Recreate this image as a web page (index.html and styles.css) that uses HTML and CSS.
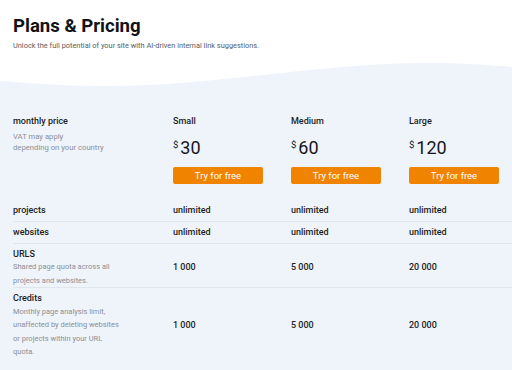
FILE: index.html
```html
<!DOCTYPE html>
<html lang="en">
<head>
<meta charset="utf-8">
<title>Plans &amp; Pricing</title>
<link rel="stylesheet" href="styles.css">
</head>
<body>
<header class="hero">
  <h1 class="title">Plans &amp; Pricing</h1>
  <p class="subtitle">Unlock the full potential of your site with AI-driven internal link suggestions.</p>
</header>
<svg class="wave" viewBox="0 0 512 30" preserveAspectRatio="none" aria-hidden="true">
  <path d="M0 20.7 C40 24.5 75 26 110 26 C215 26 320 3 427 3 C462 3 490 5 512 7 L512 30 L0 30 Z" fill="#eff3fa"/>
</svg>
<main class="pricing">
  <div class="row head">
    <div class="label-cell">
      <div class="label">monthly price</div>
      <div class="desc desc-tight">VAT may apply<br>depending on your country</div>
    </div>
    <div class="plan">
      <div class="label">Small</div>
      <div class="price"><span class="cur">$</span><span class="amount">30</span></div>
      <button class="btn">Try for free</button>
    </div>
    <div class="plan">
      <div class="label">Medium</div>
      <div class="price"><span class="cur">$</span><span class="amount">60</span></div>
      <button class="btn">Try for free</button>
    </div>
    <div class="plan">
      <div class="label">Large</div>
      <div class="price"><span class="cur">$</span><span class="amount">120</span></div>
      <button class="btn">Try for free</button>
    </div>
  </div>
  <div class="row line">
    <div class="label">projects</div>
    <div class="value">unlimited</div>
    <div class="value">unlimited</div>
    <div class="value">unlimited</div>
  </div>
  <div class="row line">
    <div class="label">websites</div>
    <div class="value">unlimited</div>
    <div class="value">unlimited</div>
    <div class="value">unlimited</div>
  </div>
  <div class="row line tall">
    <div class="label-cell">
      <div class="label">URLS</div>
      <div class="desc">Shared page quota across all projects and websites.</div>
    </div>
    <div class="value">1 000</div>
    <div class="value">5 000</div>
    <div class="value">20 000</div>
  </div>
  <div class="row line tall last">
    <div class="label-cell">
      <div class="label">Credits</div>
      <div class="desc">Monthly page analysis limit, unaffected by deleting websites or projects within your URL quota.</div>
    </div>
    <div class="value">1 000</div>
    <div class="value">5 000</div>
    <div class="value">20 000</div>
  </div>
</main>
</body>
</html>
```
FILE: styles.css
```css
html, body {
  margin: 0;
  padding: 0;
  background: #ffffff;
  font-family: Roboto, "Liberation Sans", Arial, sans-serif;
  color: #1d1e22;
}

.hero {
  padding: 15px 13px 9px;
}

.title {
  margin: 0;
  font-size: 18.6px;
  line-height: 23px;
  font-weight: 700;
  color: #111317;
}

.subtitle {
  margin: 3px 0 0;
  font-size: 7.4px;
  line-height: 10px;
  color: #585d65;
}

.wave {
  display: block;
  width: 100%;
  height: 30px;
}

.pricing {
  background: #eff3fa;
  padding: 26px 0 10px 13px;
  min-height: 254px;
}

.row {
  display: grid;
  grid-template-columns: 132px 90px 90px 90px;
  column-gap: 28px;
  align-items: center;
}

.row.head {
  align-items: start;
  padding-bottom: 16px;
}

.row.line {
  padding: 5px 0;
  border-bottom: 1px solid #e1e6ee;
}

.row.tall {
  padding-bottom: 0;
}

.row.last {
  border-bottom: none;
  padding-bottom: 1px;
}

.label {
  font-size: 9px;
  line-height: 11px;
  font-weight: 500;
  color: #1d1e22;
}

.value {
  font-size: 9px;
  line-height: 11px;
  font-weight: 500;
  color: #1d1e22;
}

.desc {
  margin-top: 0.5px;
  max-width: 111px;
  font-size: 7.5px;
  line-height: 13.5px;
  color: #8b9098;
}

.desc.desc-tight {
  margin-top: 5px;
  line-height: 10.7px;
  max-width: none;
  font-size: 7.7px;
}

.plan {
  display: flex;
  flex-direction: column;
  align-items: stretch;
}

.price {
  display: flex;
  align-items: flex-start;
  margin-top: 11.5px;
  height: 18px;
}

.cur {
  font-size: 9.5px;
  line-height: 10px;
  margin-top: 1px;
  margin-right: 2px;
  color: #16171b;
}

.amount {
  font-size: 18px;
  line-height: 18px;
  font-weight: 400;
  color: #16171b;
}

.btn {
  margin-top: 10px;
  height: 17px;
  padding: 0;
  border: none;
  border-radius: 2px;
  background: #f08300;
  color: #ffffff;
  font-family: Roboto, "Liberation Sans", Arial, sans-serif;
  font-size: 9.5px;
  line-height: 17px;
  font-weight: 400;
}
```
